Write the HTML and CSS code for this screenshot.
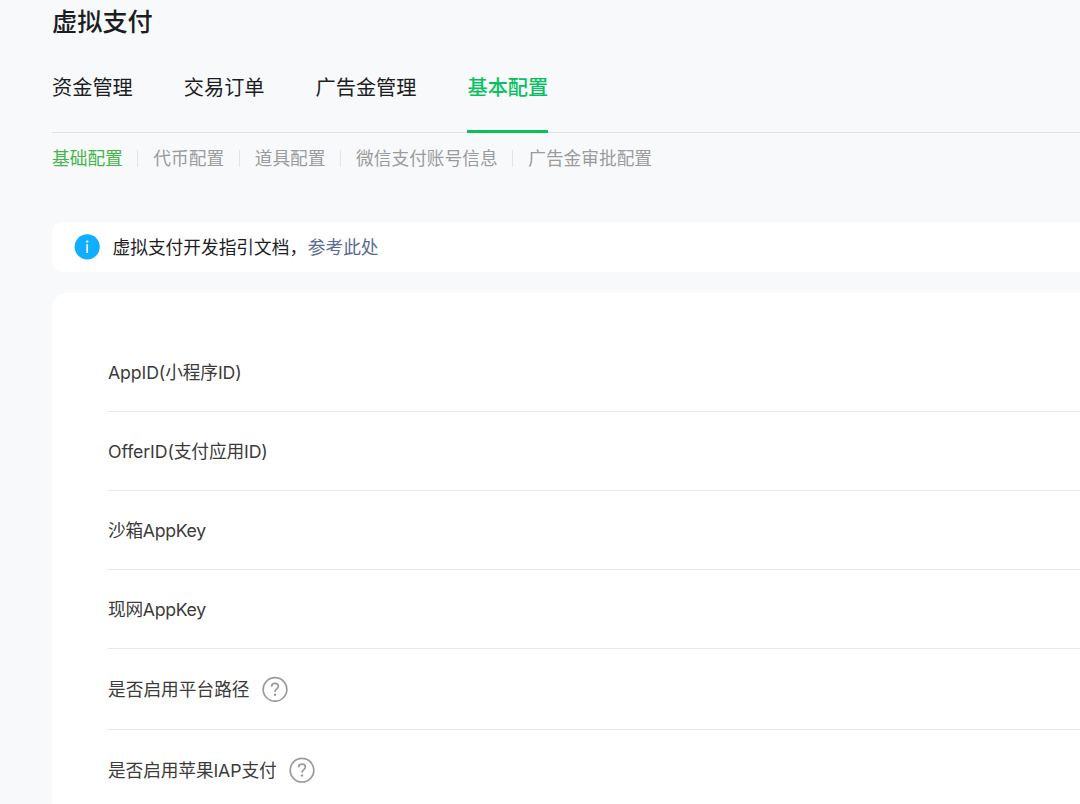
FILE: index.html
```html
<!DOCTYPE html>
<html lang="zh-CN">
<head>
<meta charset="utf-8">
<title>虚拟支付</title>
<link rel="stylesheet" href="styles.css">
</head>
<body>
<main class="page">
  <h1 class="title">虚拟支付</h1>
  <nav class="tabs">
    <a class="tab">资金管理</a>
    <a class="tab">交易订单</a>
    <a class="tab">广告金管理</a>
    <a class="tab tab-active">基本配置</a>
  </nav>
  <nav class="subtabs">
    <a class="subtab subtab-active">基础配置</a>
    <a class="subtab">代币配置</a>
    <a class="subtab">道具配置</a>
    <a class="subtab">微信支付账号信息</a>
    <a class="subtab">广告金审批配置</a>
  </nav>
  <section class="tip">
    <svg class="tip-icon" viewBox="0 0 26 26"><circle cx="13.2" cy="12.8" r="12.6" fill="#10aeff"/><circle cx="13.2" cy="7.6" r="1.2" fill="#fff"/><path d="M13.2 10.2V19" stroke="#fff" stroke-width="1.7"/></svg>
    <span class="tip-text">虚拟支付开发指引文档，</span><a class="tip-link">参考此处</a>
  </section>
  <section class="card">
    <div class="row"><span class="label">AppID(小程序ID)</span></div>
    <div class="row"><span class="label">OfferID(支付应用ID)</span></div>
    <div class="row"><span class="label label-key">沙箱AppKey</span></div>
    <div class="row"><span class="label label-key">现网AppKey</span></div>
    <div class="row row-help"><span class="label label-cjk">是否启用平台路径</span><svg class="help" viewBox="0 0 26 26"><circle cx="13" cy="13.4" r="11.8"/><path d="M9.5 10.6C9.6 8.5 11 7.4 13 7.4c2 0 3.4 1.1 3.4 2.9 0 1.3-.7 2-1.8 2.8-1.2.8-1.6 1.4-1.6 2.8"/><circle class="dot" cx="13" cy="18.7" r="1.2"/></svg></div>
    <div class="row row-help row-last"><span class="label">是否启用苹果IAP支付</span><svg class="help" viewBox="0 0 26 26"><circle cx="13" cy="13.2" r="11.8"/><path d="M9.5 10.4C9.6 8.3 11 7.2 13 7.2c2 0 3.4 1.1 3.4 2.9 0 1.3-.7 2-1.8 2.8-1.2.8-1.6 1.4-1.6 2.8"/><circle class="dot" cx="13" cy="18.5" r="1.2"/></svg></div>
  </section>
</main>
</body>
</html>
```
FILE: styles.css
```css
* { box-sizing: border-box; }
body {
  margin: 0;
  height: 804px;
  background: #f8f9fb;
  font-family: Inter, "Noto Sans CJK SC", sans-serif;
  font-size: 17.7px;
  color: #1c1d1f;
}
.page { padding-left: 52px; }
.title {
  margin: 0;
  height: 44px;
  line-height: 45px;
  font-size: 25.2px;
  font-weight: 500;
}
.tabs {
  display: flex;
  gap: 51px;
  height: 89px;
  border-bottom: 1.5px solid #dfe1e3;
  font-size: 20.2px;
}
.tab {
  height: 89px;
  padding-top: 28px;
  line-height: 31px;
}
.tab-active {
  color: #07c160;
  font-weight: 500;
  border-bottom: 3px solid #07c160;
}
.subtabs {
  display: flex;
  align-items: center;
  height: 51px;
  color: #9b9b9b;
  line-height: 24px;
}
.subtab {
  display: flex;
  align-items: center;
  height: 24px;
  white-space: nowrap;
}
.subtab + .subtab::before {
  content: "";
  width: 1px;
  height: 17px;
  margin: 0 15px 0 14.6px;
  background: #e3e4e6;
}
.subtab-active { color: #44b549; }
.tip {
  display: flex;
  align-items: center;
  height: 50px;
  margin-top: 38px;
  padding-left: 22px;
  background: #fff;
  border-radius: 10px 0 0 10px;
}
.tip-icon { width: 26px; height: 26px; margin-right: 12.5px; }
.tip-text { padding-bottom: 2px; }
.tip-link { padding-bottom: 2px; margin-left: 0.7px; color: #576b95; }
.card {
  height: 511px;
  margin-top: 21px;
  padding: 40px 0 0 56px;
  background: #fff;
  border-radius: 15px 0 0 0;
}
.row {
  display: flex;
  align-items: center;
  height: 79px;
  border-bottom: 1px solid #e8e8e8;
  color: #3b3b3b;
}
.label { padding-bottom: 2px; letter-spacing: -0.11px; }
.label-key { letter-spacing: -0.3px; }
.label-cjk { letter-spacing: 0; }
.row-help { height: 81px; }
.row-last {
  height: 74px;
  padding-top: 6px;
  border-bottom: 0;
}
.help {
  width: 26px;
  height: 26px;
  margin-left: 12px;
  fill: none;
  stroke: #9a9a9a;
  stroke-width: 1.7;
}
.help .dot { fill: #9a9a9a; stroke: none; }
```
